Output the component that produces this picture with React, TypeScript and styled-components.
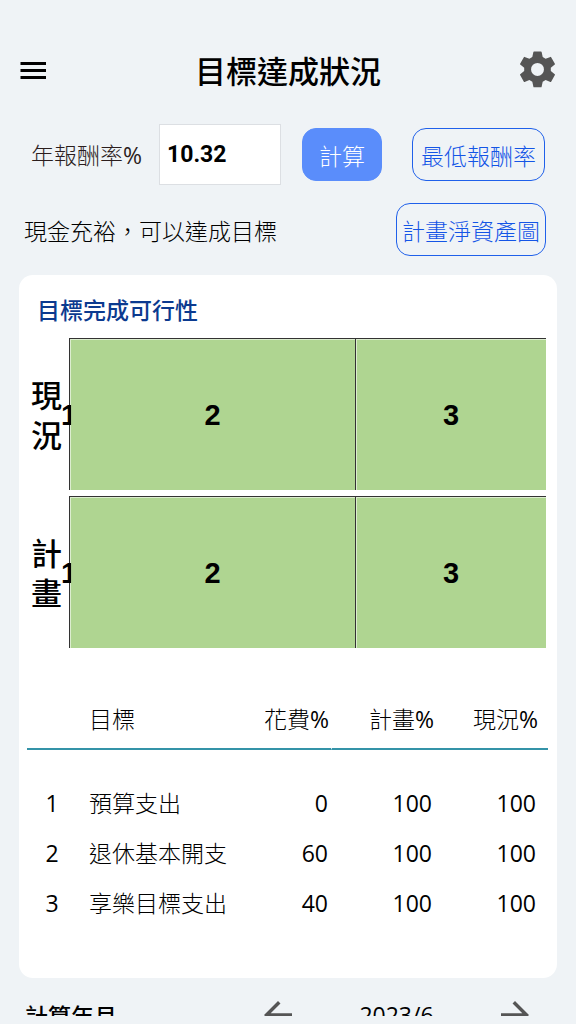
import React, { useState } from "react";
import styled, { createGlobalStyle } from "styled-components";

const cjk = '"Noto Sans CJK TC", sans-serif';

const GlobalStyle = createGlobalStyle`
  * { box-sizing: border-box; }
  body {
    margin: 0;
    background: #eff3f6;
    color: #000;
    font-family: "Open Sans", ${cjk};
    font-size: 23px;
    line-height: 32px;
  }
  button, input { font: inherit; }
`;

const Screen = styled.main`
  height: calc(100vh - 8px);
  overflow-y: auto;
  scrollbar-width: none;
`;

const Header = styled.header`
  display: grid;
  grid-template-columns: 1fr auto 1fr;
  align-items: center;
  padding: 48px 17px 0;
`;

const Title = styled.h1`
  margin: 0;
  font-family: ${cjk};
  font-size: 31px;
  line-height: 44px;
  font-weight: 500;
`;

const IconButton = styled.button<{ $end?: boolean }>`
  display: flex;
  justify-self: ${(p) => (p.$end ? "end" : "start")};
  padding: 0;
  border: 0;
  background: none;
  color: #555;
  cursor: pointer;
`;

const RateForm = styled.form`
  display: flex;
  align-items: center;
  padding: 32px 31px 0;
`;

const RateLabel = styled.label`
  flex: none;
  width: 128px;
  font-weight: 300;
  color: #2b1d1d;
  white-space: nowrap;
`;

const RateInput = styled.input`
  width: 122px;
  height: 61px;
  padding: 0 7px;
  border: 1px solid #dcdfe3;
  border-radius: 0;
  background: #fff;
  color: #000;
  font-family: Roboto, sans-serif;
  font-weight: 700;
`;

const ActionButton = styled.button<{ $filled?: boolean; $compact?: boolean }>`
  flex: none;
  height: 53px;
  padding: 0 ${(p) => (p.$filled ? 16 : p.$compact ? 5 : 8)}px;
  border: 1px solid ${(p) => (p.$filled ? "#5a8dfb" : "#1f60ea")};
  border-radius: 14px;
  background: ${(p) => (p.$filled ? "#5a8dfb" : "transparent")};
  color: ${(p) => (p.$filled ? "#fff" : "#1455e6")};
  font-family: ${cjk};
  font-weight: 300;
  white-space: nowrap;
  cursor: pointer;
`;

const RateActions = styled.div`
  display: flex;
  flex: 1;
  justify-content: space-between;
  padding-left: 21px;
`;

const StatusRow = styled.section`
  display: flex;
  align-items: center;
  justify-content: space-between;
  padding: 18px 30px 0 24px;
`;

const StatusText = styled.p`
  margin: 0;
  font-weight: 300;
  font-family: ${cjk};
`;

const Card = styled.section`
  margin: 19px 19px 0;
  padding: 18px 8px 50px;
  border-radius: 14px;
  background: #fff;
`;

const CardTitle = styled.h2`
  margin: 0 0 13px;
  padding-left: 10px;
  color: #0b3a8f;
  font-family: ${cjk};
  font-size: 23px;
  line-height: 32px;
  font-weight: 500;
`;

const ChartRows = styled.div`
  display: flex;
  flex-direction: column;
  gap: 6px;
  padding: 0 3px 0 4px;
`;

const ChartRow = styled.div`
  display: flex;
  align-items: center;
  height: 152px;
`;

const ChartLabel = styled.div`
  flex: none;
  width: 38px;
  padding-right: 7px;
  font-family: ${cjk};
  font-size: 31px;
  line-height: 40px;
  font-weight: 500;
  word-break: break-all;
`;

const Bar = styled.div`
  display: flex;
  flex: 1;
  height: 100%;
  border-top: 1px solid #333;
`;

const Segment = styled.div<{ $share: number }>`
  position: relative;
  display: flex;
  align-items: center;
  justify-content: center;
  flex: ${(p) => p.$share} 1 0;
  min-width: 0;
  border-left: ${(p) => (p.$share ? "1px solid #333" : "0")};
  background: #afd591;
  box-shadow: ${(p) => (p.$share ? "inset 1px 1px 0 #dcedcf" : "none")};
  font-family: "Liberation Sans", sans-serif;
  font-size: 29px;
  font-weight: 700;
`;

const SegmentNumber = styled.span<{ $floating: boolean }>`
  position: ${(p) => (p.$floating ? "absolute" : "static")};
  z-index: 1;
  clip-path: ${(p) => (p.$floating ? "inset(0 6px 0 0)" : "none")};
`;

const GoalTable = styled.table`
  width: calc(100% - 1px);
  margin-top: 42px;
  border-collapse: separate;
  border-spacing: 0;
  table-layout: fixed;
`;

const HeadCell = styled.th<{ $align?: string; $split?: boolean; $inset?: number }>`
  height: 60px;
  padding: 0 ${(p) => p.$inset ?? 2}px 0 0;
  border-bottom: 2px solid #3493a8;
  border-right: ${(p) => (p.$split ? "1px solid #fff" : "0")};
  font-weight: 300;
  text-align: ${(p) => p.$align ?? "left"};
  white-space: nowrap;
`;

const Cell = styled.td<{ $align?: string; $inset?: number }>`
  height: 50px;
  padding: 0 ${(p) => p.$inset ?? 0}px 0 0;
  font-weight: 300;
  text-align: ${(p) => p.$align ?? "left"};
  white-space: nowrap;
`;

const NumberText = styled.span`
  font-weight: 400;
`;

const SpacerCell = styled.td`
  height: 28px;
  padding: 0;
`;

const MonthRow = styled.section`
  display: flex;
  align-items: center;
  padding: 16px 40px 40px 25px;
  font-weight: 500;
`;

const MonthLabel = styled.span`
  flex: 1;
  font-family: ${cjk};
`;

const MonthPicker = styled.div`
  display: flex;
  align-items: center;
  justify-content: space-between;
  width: 279px;
`;

const MenuIcon = () => (
  <svg width="32" height="42" viewBox="0 0 32 42" stroke="#000" strokeWidth="3" aria-hidden="true">
    <path d="M3.5 14.5h25.500M3.5 21.500h25.500M3.5 28.500h25.500" />
  </svg>
);

const GearIcon = () => (
  <svg width="43" height="43" viewBox="-12 -11.4 24 24" fill="currentColor" aria-hidden="true">
    <path
      fillRule="evenodd"
      d="M-2.900-6.900L-2.300-9.700Q-2.250-10-1.950-10H1.950Q2.250-10 2.300-9.700L2.900-6.900L4.530-5.960L7.200-6.980Q7.460-7.080 7.610-6.820L9.710-3.180Q9.860-2.920 9.640-2.740L7.430-.94V.94L9.640 2.740Q9.860 2.920 9.710 3.180L7.610 6.820Q7.460 7.080 7.200 6.980L4.530 5.960L2.900 6.900L2.300 9.700Q2.250 10 1.950 10H-1.950Q-2.250 10-2.300 9.700L-2.900 6.900L-4.530 5.960L-7.200 6.980Q-7.460 7.080-7.610 6.820L-9.710 3.180Q-9.860 2.920-9.640 2.740L-7.430.94V-.94L-9.640-2.740Q-9.860-2.920-9.710-3.180L-7.610-6.820Q-7.460-7.080-7.200-6.980L-4.530-5.960ZM0-3.600A3.600 3.600 0 1 0 0 3.600A3.600 3.600 0 1 0 0-3.600Z"
    />
  </svg>
);

const ArrowIcon = ({ d }: { d: string }) => (
  <svg width="42" height="42" viewBox="0 0 24 24" fill="currentColor" aria-hidden="true">
    <path d={d} />
  </svg>
);

const BACK = "M20 11H7.830l5.590-5.590L12 4l-8 8 8 8 1.410-1.410L7.830 13H20v-2z";
const FORWARD = "M12 4l-1.410 1.410L16.170 11H4v2h12.170l-5.580 5.590L12 20l8-8z";

const goals = [
  { name: "預算支出", cost: 0, plan: 100, current: 100 },
  { name: "退休基本開支", cost: 60, plan: 100, current: 100 },
  { name: "享樂目標支出", cost: 40, plan: 100, current: 100 },
];

function GoalBar({ label }: { label: string }) {
  return (
    <ChartRow>
      <ChartLabel>{label}</ChartLabel>
      <Bar>
        {goals.map((goal, i) => (
          <Segment key={goal.name} $share={goal.cost}>
            <SegmentNumber $floating={goal.cost === 0}>{i + 1}</SegmentNumber>
          </Segment>
        ))}
      </Bar>
    </ChartRow>
  );
}

export default function App() {
  const [rate, setRate] = useState("10.32");
  const [month, setMonth] = useState(2023 * 12 + 5);

  return (
    <Screen lang="zh-Hant">
      <GlobalStyle />
      <Header>
        <IconButton type="button" aria-label="選單"><MenuIcon /></IconButton>
        <Title>目標達成狀況</Title>
        <IconButton type="button" aria-label="設定" $end><GearIcon /></IconButton>
      </Header>

      <RateForm onSubmit={(e) => e.preventDefault()}>
        <RateLabel htmlFor="rate">年報酬率<NumberText>%</NumberText></RateLabel>
        <RateInput id="rate" inputMode="decimal" value={rate} onChange={(e) => setRate(e.target.value)} />
        <RateActions>
          <ActionButton type="submit" $filled>計算</ActionButton>
          <ActionButton type="button">最低報酬率</ActionButton>
        </RateActions>
      </RateForm>

      <StatusRow>
        <StatusText>現金充裕，可以達成目標</StatusText>
        <ActionButton type="button" $compact>計畫淨資產圖</ActionButton>
      </StatusRow>

      <Card>
        <CardTitle>目標完成可行性</CardTitle>
        <ChartRows>
          <GoalBar label="現況" />
          <GoalBar label="計畫" />
        </ChartRows>
        <GoalTable>
          <colgroup>
            <col style={{ width: 62 }} />
            <col />
            <col style={{ width: 104 }} />
            <col style={{ width: 104 }} />
            <col style={{ width: 112 }} />
          </colgroup>
          <thead>
            <tr>
              <HeadCell aria-label="編號" />
              <HeadCell scope="col">目標</HeadCell>
              <HeadCell scope="col" $align="right" $split>花費<NumberText>%</NumberText></HeadCell>
              <HeadCell scope="col" $align="right">計畫<NumberText>%</NumberText></HeadCell>
              <HeadCell scope="col" $align="right" $inset={10}>現況<NumberText>%</NumberText></HeadCell>
            </tr>
          </thead>
          <tbody>
            <tr><SpacerCell colSpan={5} /></tr>
            {goals.map((goal, i) => (
              <tr key={goal.name}>
                <Cell $align="center" $inset={12}><NumberText>{i + 1}</NumberText></Cell>
                <Cell>{goal.name}</Cell>
                <Cell $align="right" $inset={4}><NumberText>{goal.cost}</NumberText></Cell>
                <Cell $align="right" $inset={4}><NumberText>{goal.plan}</NumberText></Cell>
                <Cell $align="right" $inset={12}><NumberText>{goal.current}</NumberText></Cell>
              </tr>
            ))}
          </tbody>
        </GoalTable>
      </Card>

      <MonthRow>
        <MonthLabel>計算年月</MonthLabel>
        <MonthPicker>
          <IconButton type="button" aria-label="上個月" onClick={() => setMonth(month - 1)}>
            <ArrowIcon d={BACK} />
          </IconButton>
          <span>{Math.floor(month / 12)}/{(month % 12) + 1}</span>
          <IconButton type="button" aria-label="下個月" onClick={() => setMonth(month + 1)}>
            <ArrowIcon d={FORWARD} />
          </IconButton>
        </MonthPicker>
      </MonthRow>
    </Screen>
  );
}
